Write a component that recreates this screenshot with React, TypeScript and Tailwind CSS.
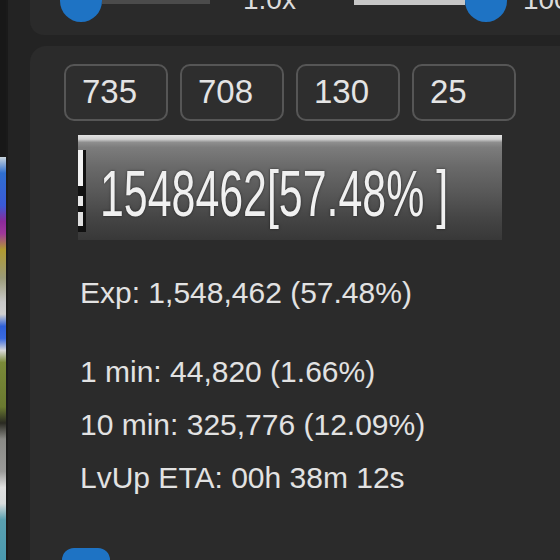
const boxes = ["735", "708", "130", "25"];

const rates = [
  "1 min: 44,820 (1.66%)",
  "10 min: 325,776 (12.09%)",
  "LvUp ETA: 00h 38m 12s",
];

const App = () => {
  return (
    <div className="w-[560px] h-[560px] flex overflow-hidden bg-[#232323] font-['Liberation_Sans',Arial,sans-serif] text-[#e2e2e2]">
      {/* game window edge on the left */}
      <div className="w-[6px] flex flex-col shrink-0">
        <div className="h-[157px] bg-[#181818]" />
        <div className="flex-1 bg-[linear-gradient(to_bottom,#c9d4dc_0%,#2f6fd0_4%,#3a5ad8_12%,#8c2a9a_16%,#a0389a_19%,#b09a30_23%,#9a9a78_30%,#c8c8c8_36%,#d0d0d0_39%,#2f60d8_42%,#3a6ae0_45%,#d8d8d8_48%,#7a8a38_51%,#6a7a30_62%,#2a2a22_66%,#8a8a86_70%,#9a9a98_78%,#e0e0e0_82%,#d8dcdc_86%,#5aa0b0_90%,#4a9ab0_100%)]" />
      </div>
      <div className="w-[2px] bg-[#1a1a1a] shrink-0" />

      <div className="flex-1 flex flex-col pl-[22px]">
        {/* speed / volume sliders (cut off at the top) */}
        <div className="h-[35px] shrink-0 bg-[#2a2a2a] rounded-bl-[14px] overflow-hidden">
          <div className="flex items-start">
            <div className="ml-[30px] -mt-[20px] w-[42px] h-[42px] rounded-full bg-[#1e73c4] shrink-0" />
            <div className="w-[108px] h-[4px] bg-[#4b4b4b] shrink-0" />
            <span className="ml-[33px] -mt-[14px] text-[28px] leading-none text-[#dcdcdc]">
              1.0x
            </span>
            <div className="ml-[58px] w-[111px] h-[5px] bg-[#c6c6c6] shrink-0" />
            <div className="-mt-[20px] w-[42px] h-[42px] rounded-full bg-[#1e73c4] shrink-0" />
            <span className="ml-[16px] -mt-[14px] text-[28px] leading-none text-[#dcdcdc] whitespace-nowrap">
              100
            </span>
          </div>
        </div>

        {/* exp panel */}
        <div className="mt-[11px] flex-1 bg-[#2b2b2b] rounded-tl-[16px] pl-[34px] pt-[18px] flex flex-col">
          <div className="flex gap-[12px]">
            {boxes.map((b) => (
              <div
                key={b}
                className="w-[104px] h-[57px] rounded-[10px] border-2 border-[#565656] bg-[#2e2e2e] flex items-center pl-[16px] pb-[2px] text-[33px] text-[#e4e4e4]"
              >
                {b}
              </div>
            ))}
          </div>

          {/* captured exp bar */}
          <div className="ml-[14px] mt-[14px] w-[424px] h-[105px] bg-[linear-gradient(to_bottom,#e2e2e2_0%,#d0d0d0_4%,#8e8e8e_7%,#7c7c7c_12%,#6a6a6a_30%,#585858_55%,#444444_80%,#383838_100%)] flex items-center pt-[12px] overflow-hidden">
            <div className="w-[8px] h-[82px] -mt-[6px] flex flex-col bg-[#111111] shrink-0">
              <div className="h-[36px] w-[5px] bg-[#f2f2f2]" />
              <div className="h-[10px]" />
              <div className="h-[10px] w-[5px] bg-[#e8e8e8]" />
              <div className="h-[6px]" />
              <div className="h-[14px] w-[5px] bg-[#e0e0e0]" />
            </div>
            <span className="ml-[14px] text-[64px] leading-none text-[#f0f0f0] whitespace-nowrap origin-left scale-x-[0.67] [text-shadow:0_0_3px_rgba(0,0,0,0.6)]">
              1548462[57.48% ]
            </span>
          </div>

          {/* stats */}
          <div className="ml-[16px] mt-[26px] text-[30px] leading-[53px] whitespace-nowrap">
            Exp: 1,548,462 (57.48%)
          </div>
          <div className="ml-[16px] mt-[26px] flex flex-col text-[30px] leading-[53px] whitespace-nowrap">
            {rates.map((r) => (
              <div key={r}>{r}</div>
            ))}
          </div>

          <div className="ml-[-2px] mt-[44px] w-[48px] h-[24px] rounded-t-[12px] bg-[#1e73c4] shrink-0" />
        </div>
      </div>
    </div>
  );
};

export default App;
